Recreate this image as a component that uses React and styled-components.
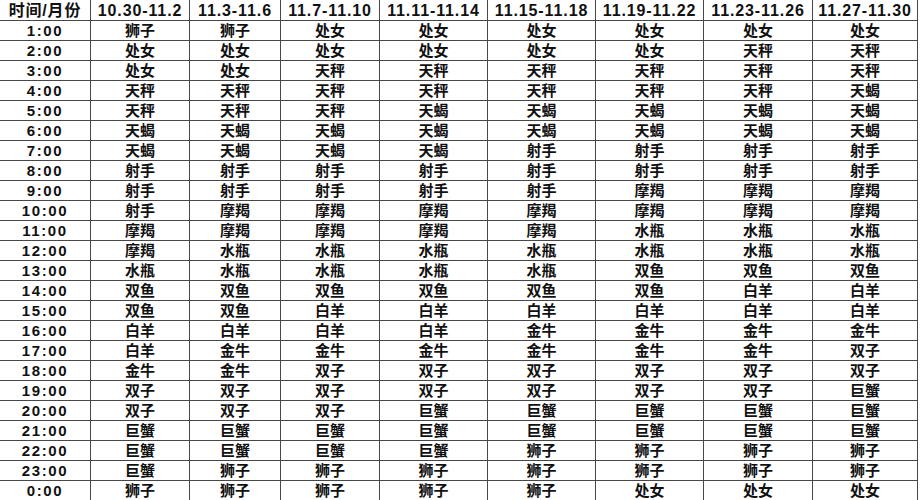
import React from 'react';
import styled, { createGlobalStyle } from 'styled-components';

const GlobalStyle = createGlobalStyle`
    html, body {
        margin: 0;
        padding: 0;
        background: #fff;
    }
    body {
        font-family: "Liberation Sans", "Noto Sans CJK SC", sans-serif;
        color: #111;
    }
`;

const periods = [
    '10.30-11.2', '11.3-11.6', '11.7-11.10', '11.11-11.14',
    '11.15-11.18', '11.19-11.22', '11.23-11.26', '11.27-11.30',
];

const rows = [
    ['1:00', '狮子 狮子 处女 处女 处女 处女 处女 处女'],
    ['2:00', '处女 处女 处女 处女 处女 处女 天秤 天秤'],
    ['3:00', '处女 处女 天秤 天秤 天秤 天秤 天秤 天秤'],
    ['4:00', '天秤 天秤 天秤 天秤 天秤 天秤 天秤 天蝎'],
    ['5:00', '天秤 天秤 天秤 天蝎 天蝎 天蝎 天蝎 天蝎'],
    ['6:00', '天蝎 天蝎 天蝎 天蝎 天蝎 天蝎 天蝎 天蝎'],
    ['7:00', '天蝎 天蝎 天蝎 天蝎 射手 射手 射手 射手'],
    ['8:00', '射手 射手 射手 射手 射手 射手 射手 射手'],
    ['9:00', '射手 射手 射手 射手 射手 摩羯 摩羯 摩羯'],
    ['10:00', '射手 摩羯 摩羯 摩羯 摩羯 摩羯 摩羯 摩羯'],
    ['11:00', '摩羯 摩羯 摩羯 摩羯 摩羯 水瓶 水瓶 水瓶'],
    ['12:00', '摩羯 水瓶 水瓶 水瓶 水瓶 水瓶 水瓶 水瓶'],
    ['13:00', '水瓶 水瓶 水瓶 水瓶 水瓶 双鱼 双鱼 双鱼'],
    ['14:00', '双鱼 双鱼 双鱼 双鱼 双鱼 双鱼 白羊 白羊'],
    ['15:00', '双鱼 双鱼 白羊 白羊 白羊 白羊 白羊 白羊'],
    ['16:00', '白羊 白羊 白羊 白羊 金牛 金牛 金牛 金牛'],
    ['17:00', '白羊 金牛 金牛 金牛 金牛 金牛 金牛 双子'],
    ['18:00', '金牛 金牛 双子 双子 双子 双子 双子 双子'],
    ['19:00', '双子 双子 双子 双子 双子 双子 双子 巨蟹'],
    ['20:00', '双子 双子 双子 巨蟹 巨蟹 巨蟹 巨蟹 巨蟹'],
    ['21:00', '巨蟹 巨蟹 巨蟹 巨蟹 巨蟹 巨蟹 巨蟹 巨蟹'],
    ['22:00', '巨蟹 巨蟹 巨蟹 巨蟹 狮子 狮子 狮子 狮子'],
    ['23:00', '巨蟹 狮子 狮子 狮子 狮子 狮子 狮子 狮子'],
    ['0:00', '狮子 狮子 狮子 狮子 狮子 处女 处女 处女'],
];

function App() {
    return (
        <>
            <GlobalStyle />
            <Sheet>
                <HeadCell>时间/月份</HeadCell>
                {periods.map(p => <HeadCell key={p} $digits>{p}</HeadCell>)}

                {rows.map(([time, signs]) => (
                    <React.Fragment key={time}>
                        <TimeCell>{time}</TimeCell>
                        {signs.split(' ').map((sign, i) => (
                            <SignCell key={i}>{sign}</SignCell>
                        ))}
                    </React.Fragment>
                ))}
            </Sheet>
        </>
    );
}

export default App;

const Sheet = styled.div`
    display: grid;
    grid-template-columns: 91px 99px 91px 99px 108px 108px 108px 109px 105px;
    grid-template-rows: 21px;
    grid-auto-rows: 20px;
    width: 918px;
    height: 500px;
    overflow: hidden;
    background: #fff;
`;

const Cell = styled.div`
    box-sizing: border-box;
    display: flex;
    align-items: center;
    justify-content: center;
    border-right: 1px solid #474747;
    border-bottom: 1px solid #474747;
    white-space: nowrap;
    overflow: hidden;
    color: #111;
    line-height: 1;
`;

const HeadCell = styled(Cell)`
    font-size: 16px;
    font-weight: 700;
    letter-spacing: ${props => props.$digits ? '0.9px' : '0.8px'};
    padding-top: 1px;
`;

const TimeCell = styled(Cell)`
    font-size: 15px;
    font-weight: 700;
    letter-spacing: 1.6px;
`;

const SignCell = styled(Cell)`
    font-size: 15px;
    font-weight: 700;
`;
